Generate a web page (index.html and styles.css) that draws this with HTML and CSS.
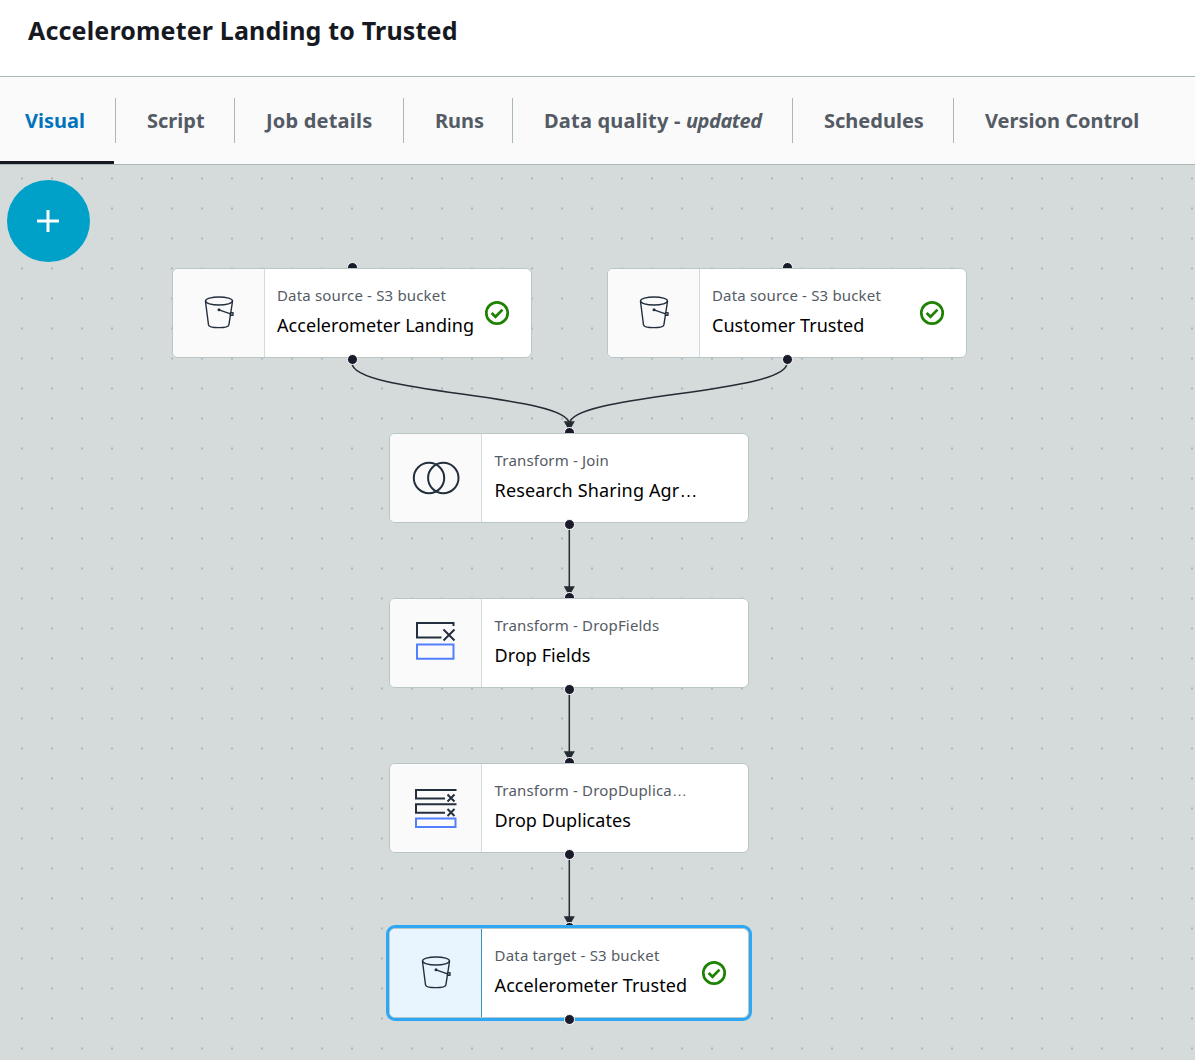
FILE: index.html
```html
<!DOCTYPE html>
<html lang="en">
<head>
<meta charset="utf-8">
<title>Accelerometer Landing to Trusted</title>
<link rel="stylesheet" href="styles.css">
</head>
<body>
<svg class="symbols" aria-hidden="true">
  <symbol id="bucket" viewBox="0 0 32 36">
    <g fill="none" stroke="#232f3e" stroke-width="1.4" stroke-linecap="round" stroke-linejoin="round">
      <ellipse cx="15" cy="6" rx="13.500" ry="4"/>
      <path d="M1.500 6.500 4.500 29.800c.3 1.600 4.500 2.800 10.200 2.800s9.900-1.200 10.200-2.800L28.500 6.500"/>
      <path d="M15 14.800 26.500 18.900"/>
      <rect x="26.500" y="17.600" width="2.500" height="2.700"/>
    </g>
    <circle cx="15" cy="14.700" r="1.500" fill="#232f3e"/>
  </symbol>
  <symbol id="check" viewBox="0 0 26 26">
    <g fill="none" stroke="#1d8102" stroke-width="2.700"><circle cx="13" cy="13" r="10.700"/><path d="m7.600 13 3.900 3.800 7-7.200"/></g>
  </symbol>
</svg>
<header class="header"><h1 class="title">Accelerometer Landing to Trusted</h1></header>
<nav class="tabs">
  <a class="tab tab-active">Visual</a>
  <a class="tab">Script</a>
  <a class="tab tab-details">Job details</a>
  <a class="tab">Runs</a>
  <a class="tab tab-quality"><span>Data quality - <em>updated</em></span></a>
  <a class="tab">Schedules</a>
  <a class="tab">Version Control</a>
</nav>
<main class="canvas">
  <button class="add" aria-label="Add node"><svg width="22" height="22" viewBox="0 0 22 22"><path d="M11 0v22M0 11h22" stroke="#fff" stroke-width="3"/></svg></button>
  <svg class="edges" width="1195" height="895" viewBox="0 165 1195 895">
    <g fill="none" stroke="#232b33" stroke-width="1.500">
      <path d="M352 363C352 394 569 394 569.300 424"/>
      <path d="M787 363C787 394 570 394 569.300 424"/>
      <path d="M569.300 524V588M569.300 689V753M569.300 854V918"/>
    </g>
    <g fill="#232b33">
      <path id="arrow" d="M563.800 421.200h11l-3.500 6.300h-4z"/>
      <use href="#arrow" y="165"/><use href="#arrow" y="330"/><use href="#arrow" y="495"/>
    </g>
  </svg>
  <article class="node n-landing">
    <i class="port port-in"></i>
    <div class="card">
      <div class="icon"><svg class="bucket"><use href="#bucket"/></svg></div>
      <div class="text"><p class="kind">Data source - S3 bucket</p><p class="name">Accelerometer Landing</p></div>
      <svg class="check"><use href="#check"/></svg>
    </div>
    <i class="port port-out"></i>
  </article>
  <article class="node n-customer">
    <i class="port port-in"></i>
    <div class="card">
      <div class="icon"><svg class="bucket"><use href="#bucket"/></svg></div>
      <div class="text"><p class="kind">Data source - S3 bucket</p><p class="name">Customer Trusted</p></div>
      <svg class="check"><use href="#check"/></svg>
    </div>
    <i class="port port-out"></i>
  </article>
  <article class="node n-join">
    <i class="port port-in"></i>
    <div class="card">
      <div class="icon"><svg width="48" height="34" viewBox="0 0 48 34" fill="none" stroke="#232f3e" stroke-width="2"><circle cx="17" cy="17" r="15.200"/><circle cx="31.300" cy="17" r="15.200"/></svg></div>
      <div class="text"><p class="kind">Transform - Join</p><p class="name name-long">Research Sharing Agr<span class="more">…</span></p></div>
    </div>
    <i class="port port-out"></i>
  </article>
  <article class="node n-fields">
    <i class="port port-in"></i>
    <div class="card">
      <div class="icon"><svg class="drop" width="42" height="40" viewBox="0 0 42 40" fill="none" stroke-width="2"><path d="M38.500 5V2H2v14.500h24.500M28.500 8.500l11 11M39.500 8.500l-11 11" stroke="#232f3e"/><path d="M2 23.500h36.500v14.200H2z" stroke="#527fff"/></svg></div>
      <div class="text"><p class="kind">Transform - DropFields</p><p class="name">Drop Fields</p></div>
    </div>
    <i class="port port-out"></i>
  </article>
  <article class="node n-duplicates">
    <i class="port port-in"></i>
    <div class="card">
      <div class="icon"><svg class="drop-many" width="42" height="40" viewBox="0 0 42 40" fill="none" stroke-width="2"><path d="M41.500 2H1v8.500h29M41.500 16.200H1v8.500h29M32.500 6.500l7 7M39.500 6.500l-7 7M32.500 21l7 7M39.500 21l-7 7" stroke="#232f3e"/><path d="M1 30.500h39.500v8.500H1z" stroke="#527fff"/></svg></div>
      <div class="text"><p class="kind">Transform - DropDuplica<span class="more">…</span></p><p class="name">Drop Duplicates</p></div>
    </div>
    <i class="port port-out"></i>
  </article>
  <article class="node n-target selected">
    <i class="port port-in"></i>
    <div class="card">
      <div class="icon"><svg class="bucket"><use href="#bucket"/></svg></div>
      <div class="text"><p class="kind">Data target - S3 bucket</p><p class="name">Accelerometer Trusted</p></div>
      <svg class="check"><use href="#check"/></svg>
    </div>
    <i class="port port-out"></i>
  </article>
</main>
</body>
</html>
```
FILE: styles.css
```css
* { box-sizing: border-box; }
body { margin: 0; width: 1195px; height: 1060px; overflow: hidden; background: #fff; color: #16191f; font-family: "Noto Sans", "Open Sans", sans-serif; }
p, h1 { margin: 0; font-weight: 400; }
.symbols { display: none; }
.header { height: 77px; padding: 12px 28px; border-bottom: 1px solid #aab7b8; }
.title { font-size: 25px; line-height: 36px; font-weight: 700; letter-spacing: 0.17px; white-space: nowrap; }
.tabs { height: 88px; display: grid; grid-template-columns: 116px 119px 169px 109px 280px 161px 1fr; background: #fafafa; border-bottom: 1px solid #aab7b8; }
.tab { display: flex; align-items: center; height: 45px; margin-top: 21px; padding: 0 0 1px 31px; border-right: 1px solid #aab7b8; color: #545b64; font-size: 20px; font-weight: 700; white-space: nowrap; }
.tab:last-child { border-right: 0; }
.tab-active { position: relative; padding-left: 25px; color: #0073bb; }
.tab-active::after { content: ""; position: absolute; left: 0; bottom: -21px; width: 114px; height: 3px; background: #16191f; }
.tab-details { letter-spacing: 0.2px; }
.tab-quality { letter-spacing: 0.2px; }
.tab-quality em { letter-spacing: -0.45px; }
.canvas { position: relative; height: 895px; background: #d5dbdb radial-gradient(circle at 1px 1px, #98a3a5 0.500px, transparent 1.100px) 21px 12.500px / 30px 30px; }
.add { position: absolute; left: 7px; top: 15px; width: 83px; height: 82px; padding: 0 1px 0 0; border: 0; border-radius: 50%; background: #00a1c9; display: grid; place-items: center; }
.edges { position: absolute; left: 0; top: 0; }
.node { position: absolute; width: 360px; height: 90px; }
.n-landing { left: 172px; top: 103px; }
.n-customer { left: 607px; top: 103px; }
.n-join { left: 389px; top: 268px; }
.n-fields { left: 389px; top: 433px; }
.n-duplicates { left: 389px; top: 598px; }
.n-target { left: 389px; top: 763px; }
.card { position: relative; display: flex; width: 100%; height: 100%; border: 1px solid #b9c6c6; border-radius: 6px; background: #fff; overflow: hidden; }
.icon { width: 92px; flex: none; display: grid; place-items: center; background: #fafafa; border-right: 1px solid #d5dbdb; }
.text { flex: none; padding: 13px 0 0 12px; white-space: nowrap; }
.n-join .text, .n-fields .text, .n-duplicates .text, .n-target .text { padding-left: 12.600px; }
.kind { height: 26px; font-size: 15px; line-height: 26px; letter-spacing: 0.17px; color: #545b64; }
.name { height: 34px; font-size: 18px; line-height: 34px; letter-spacing: 0.05px; color: #000; }
.name-long { letter-spacing: 0.15px; }
.more { font-family: "Liberation Sans", sans-serif; }
.bucket { width: 32px; height: 36px; margin-left: 2px; }
.drop { margin-bottom: 4px; }
.drop-many { margin-left: 1px; }
.check { position: absolute; left: 311px; top: 31px; width: 26px; height: 26px; }
.port { position: absolute; left: 174.500px; width: 11px; height: 11px; border: 1px solid #fff; border-radius: 50%; background: #1a1a2b; }
.port-in { top: -6px; }
.port-out { bottom: -7px; }
.selected .card { border-color: #b9c6c6; box-shadow: 0 0 0 3px #2ea8f5; }
.selected .icon { background: #e9f5fe; border-color: #3a8bbb; }
```
